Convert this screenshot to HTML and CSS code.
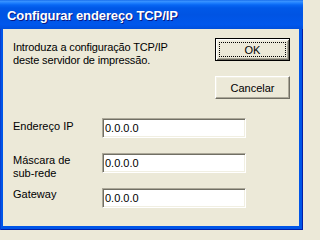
FILE: index.html
```html
<!DOCTYPE html>
<html lang="pt">
<head>
<meta charset="utf-8">
<title>Configurar endereço TCP/IP</title>
<link rel="stylesheet" href="styles.css">
</head>
<body>
<div class="window">
  <div class="titlebar"><span class="title">Configurar endereço TCP/IP</span></div>
  <div class="client">
    <div class="top">
      <p class="intro">Introduza a configuração TCP/IP<br>deste servidor de impressão.</p>
      <div class="buttons">
        <button class="btn btn-default" type="button">OK</button>
        <button class="btn" type="button">Cancelar</button>
      </div>
    </div>
    <div class="fields">
      <label class="lbl lbl-ip" for="ip">Endereço IP</label>
      <input class="edit" id="ip" type="text" value="0.0.0.0">
      <label class="lbl lbl-mask" for="mask">Máscara de<br>sub-rede</label>
      <input class="edit" id="mask" type="text" value="0.0.0.0">
      <label class="lbl lbl-gw" for="gw">Gateway</label>
      <input class="edit" id="gw" type="text" value="0.0.0.0">
    </div>
  </div>
</div>
</body>
</html>
```

FILE: styles.css
```css
* { box-sizing: border-box; }

html, body {
  margin: 0;
  padding: 0;
  background: #ece9d8;
}

.window {
  width: 303px;
  height: 230px;
  display: flex;
  flex-direction: column;
  background: #0055e8;
  box-shadow: inset 1px 0 #0a3fd0, inset -1px -1px #001ea8;
  font-family: "Liberation Sans", Arial, sans-serif;
  font-size: 11px;
  color: #000;
}

.titlebar {
  height: 29px;
  padding: 3px 0 0 7px;
  background: linear-gradient(#0a5fe6 0, #3d95ff 1px, #1f80ff 3px, #0766f4 5px, #0058e8 8px, #0054e3 50%, #0057ec 85%, #004fdc 100%);
}

.title {
  display: block;
  line-height: 26px;
  font-family: "Liberation Sans", Arial, sans-serif;
  font-weight: bold;
  font-size: 13px;
  letter-spacing: -0.1px;
  color: #fff;
  text-shadow: 1px 1px #0a1883;
  white-space: nowrap;
}

.client {
  flex: 1;
  margin: 0 4px 4px 3px;
  background: #ece9d8;
  padding: 9px 9px 0 10px;
}

.top {
  display: flex;
  align-items: flex-start;
}

.intro {
  margin: 3px 0 0 0;
  line-height: 13px;
  letter-spacing: -0.15px;
  white-space: nowrap;
}

.buttons {
  margin-left: auto;
  display: flex;
  flex-direction: column;
  gap: 15px;
}

.btn {
  position: relative;
  width: 75px;
  height: 23px;
  padding: 0;
  margin: 0;
  font-family: "Liberation Sans", Arial, sans-serif;
  font-size: 11px;
  color: #000;
  background: #ece9d8;
  border: 1px solid;
  border-color: #fff #716f64 #716f64 #fff;
  box-shadow: inset -1px -1px #aca899, inset 1px 1px #f1efe2;
  border-radius: 0;
  appearance: none;
}

.btn-default {
  border-color: #000;
  box-shadow: inset 1px 1px #fff, inset -1px -1px #716f64, inset 2px 2px #f1efe2, inset -2px -2px #aca899;
}

.btn-default::after {
  content: "";
  position: absolute;
  inset: 3px;
  border: 1px dotted #000;
}

.fields {
  margin-top: 19px;
  display: grid;
  grid-template-columns: 89px 144px;
  grid-template-rows: 20px 20px 20px;
  row-gap: 15px;
}

.lbl {
  align-self: start;
  line-height: 13px;
  white-space: nowrap;
}

.lbl-ip { margin-top: 2px; }
.lbl-mask { margin-top: 1px; }
.lbl-gw { margin-top: 0; }

.edit {
  width: 144px;
  height: 20px;
  margin: 0;
  padding: 0 2px;
  font-family: "Liberation Sans", Arial, sans-serif;
  font-size: 11px;
  color: #000;
  background: #fff;
  border: 1px solid;
  border-color: #aca899 #fff #fff #aca899;
  box-shadow: inset 1px 1px #716f64, inset -1px -1px #f1efe2;
  border-radius: 0;
  outline: none;
}
```
